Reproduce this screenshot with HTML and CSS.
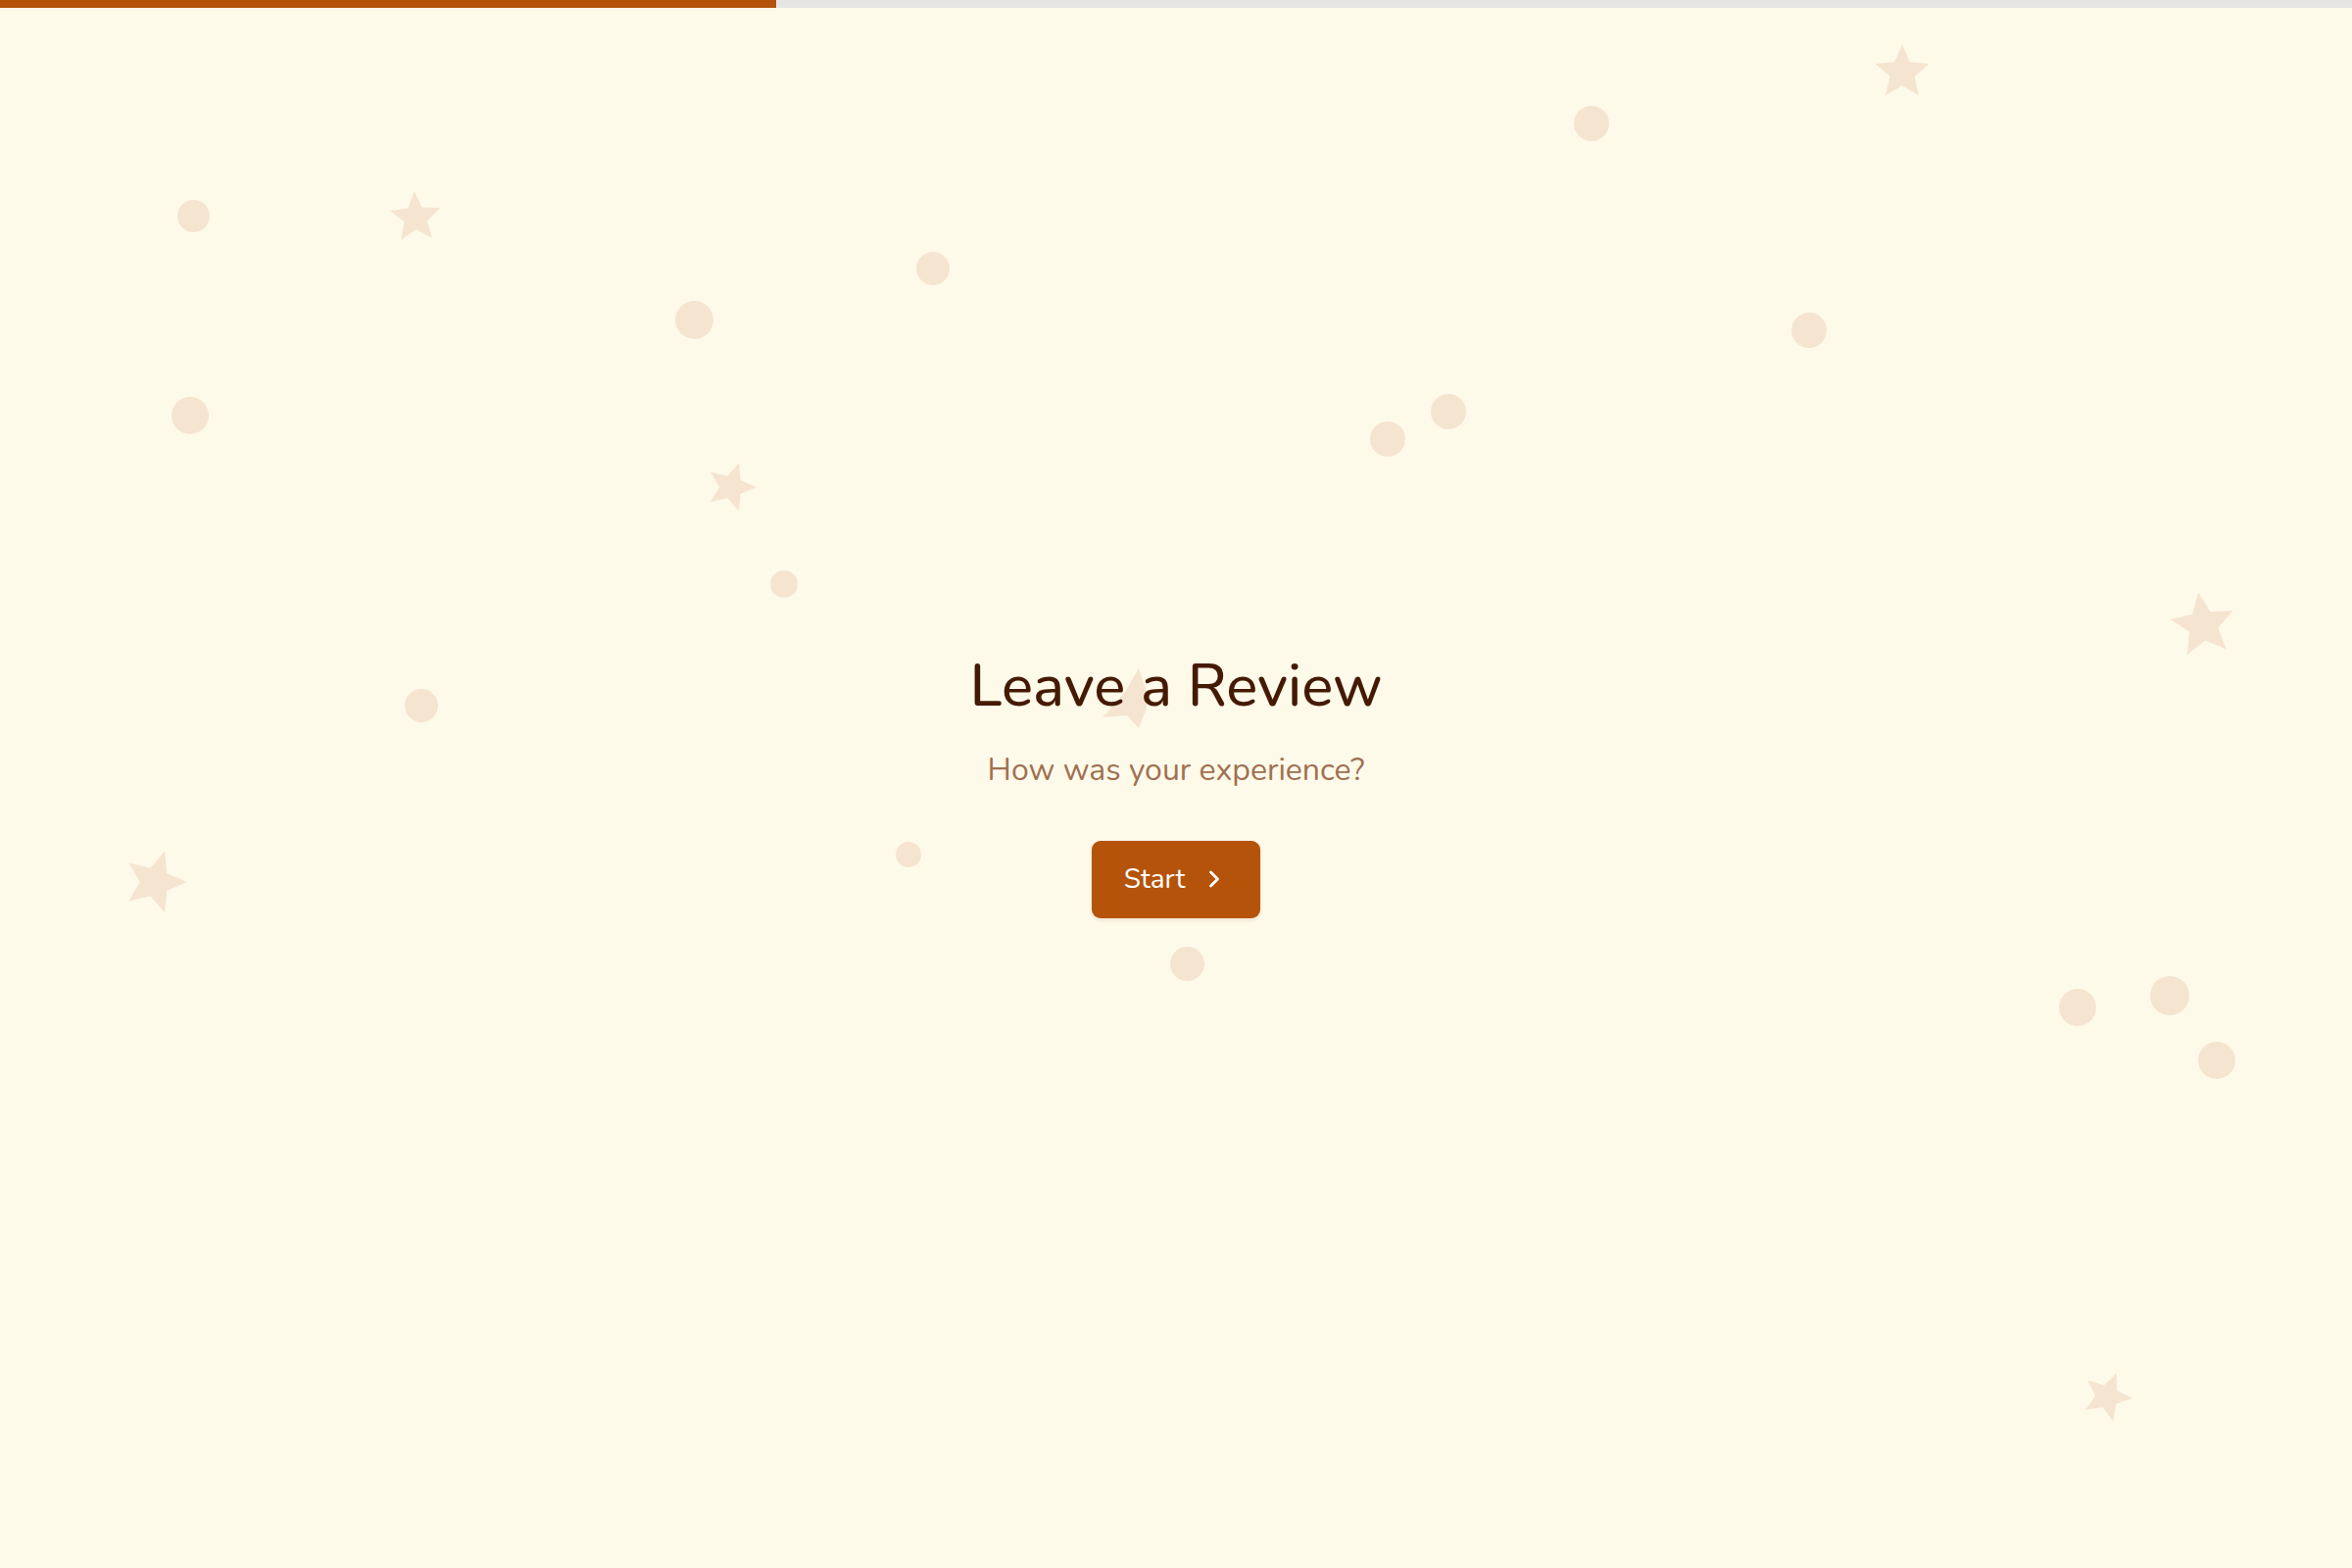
FILE: index.html
```html
<!DOCTYPE html>
<html lang="en">
<head>
<meta charset="utf-8">
<title>Leave a Review</title>
<link rel="stylesheet" href="styles.css">
</head>
<body>
  <div class="progress"><div class="progress-fill" style="width:33%"></div></div>

  <div class="confetti" aria-hidden="true">
    <span class="dot" style="--x:197px;--y:220px;--d:33px"></span>
    <span class="dot" style="--x:194px;--y:424px;--d:38px"></span>
    <span class="dot" style="--x:708px;--y:326px;--d:39px"></span>
    <span class="dot" style="--x:952px;--y:274px;--d:34px"></span>
    <span class="dot" style="--x:800px;--y:596px;--d:28px"></span>
    <span class="dot" style="--x:430px;--y:720px;--d:34px"></span>
    <span class="dot" style="--x:927px;--y:872px;--d:26px"></span>
    <span class="dot" style="--x:1211px;--y:983px;--d:35px"></span>
    <span class="dot" style="--x:1416px;--y:448px;--d:36px"></span>
    <span class="dot" style="--x:1478px;--y:420px;--d:36px"></span>
    <span class="dot" style="--x:1624px;--y:126px;--d:36px"></span>
    <span class="dot" style="--x:1846px;--y:337px;--d:36px"></span>
    <span class="dot" style="--x:2120px;--y:1028px;--d:38px"></span>
    <span class="dot" style="--x:2214px;--y:1016px;--d:40px"></span>
    <span class="dot" style="--x:2262px;--y:1082px;--d:38px"></span>

    <svg class="star" style="--x:424px;--y:222px;--d:54px;--r:-3deg" viewBox="0 0 24 24"><polygon points="12,0 15.23,7.55 23.41,8.29 17.23,13.7 19.05,21.71 12,17.5 4.95,21.71 6.77,13.7 0.59,8.29 8.77,7.55"/></svg>
    <svg class="star" style="--x:746px;--y:497px;--d:52px;--r:18deg" viewBox="0 0 24 24"><polygon points="12,0 15.23,7.55 23.41,8.29 17.23,13.7 19.05,21.71 12,17.5 4.95,21.71 6.77,13.7 0.59,8.29 8.77,7.55"/></svg>
    <svg class="star" style="--x:1941px;--y:74px;--d:58px;--r:0deg" viewBox="0 0 24 24"><polygon points="12,0 15.23,7.55 23.41,8.29 17.23,13.7 19.05,21.71 12,17.5 4.95,21.71 6.77,13.7 0.59,8.29 8.77,7.55"/></svg>
    <svg class="star" style="--x:2248px;--y:638px;--d:68px;--r:-8deg" viewBox="0 0 24 24"><polygon points="12,0 15.23,7.55 23.41,8.29 17.23,13.7 19.05,21.71 12,17.5 4.95,21.71 6.77,13.7 0.59,8.29 8.77,7.55"/></svg>
    <svg class="star" style="--x:158px;--y:900px;--d:66px;--r:18deg" viewBox="0 0 24 24"><polygon points="12,0 15.23,7.55 23.41,8.29 17.23,13.7 19.05,21.71 12,17.5 4.95,21.71 6.77,13.7 0.59,8.29 8.77,7.55"/></svg>
    <svg class="star" style="--x:2150px;--y:1425px;--d:52px;--r:22deg" viewBox="0 0 24 24"><polygon points="12,0 15.23,7.55 23.41,8.29 17.23,13.7 19.05,21.71 12,17.5 4.95,21.71 6.77,13.7 0.59,8.29 8.77,7.55"/></svg>
    <!-- star caught mid-flip, seen nearly edge-on -->
    <svg class="star flip" viewBox="0 0 56 70"><polygon points="42,4 50,28 50,44 42,65 30,52 5,54 18,40 28,28"/></svg>
  </div>

  <main class="intro">
    <h1 class="intro-title">Leave a Review</h1>
    <p class="intro-sub">How was your experience?</p>
    <button class="start-btn" type="button">
      <span>Start</span>
      <svg class="start-icon" viewBox="0 0 24 24" fill="none" stroke="currentColor" stroke-width="2.4" stroke-linecap="round" stroke-linejoin="round"><path d="m9 18 6-6-6-6"/></svg>
    </button>
  </main>
</body>
</html>
```

FILE: styles.css
```css
* { box-sizing: border-box; }

html, body {
  margin: 0;
  height: 100%;
}

body {
  background: #fefaea;
  font-family: "Nunito", "Lato", "Open Sans", sans-serif;
  overflow: hidden;
  position: relative;
}

.progress {
  position: fixed;
  top: 0;
  left: 0;
  right: 0;
  height: 8px;
  background: #e6e5e3;
  z-index: 2;
}

.progress-fill {
  height: 100%;
  background: #b45309;
}

.confetti {
  position: absolute;
  inset: 0;
  pointer-events: none;
  z-index: 0;
}

.dot {
  position: absolute;
  left: calc(var(--x) - var(--d) / 2);
  top: calc(var(--y) - var(--d) / 2);
  width: var(--d);
  height: var(--d);
  border-radius: 50%;
  background: #f5e5d0;
}

.star {
  position: absolute;
  left: calc(var(--x) - var(--d) / 2);
  top: calc(var(--y) - var(--d) / 2);
  width: var(--d);
  height: var(--d);
  transform: rotate(var(--r));
  fill: #f5e5d0;
}

.star.flip {
  left: 1120px;
  top: 678px;
  width: 56px;
  height: 70px;
  transform: none;
}

.intro {
  position: relative;
  z-index: 1;
  min-height: 100vh;
  display: flex;
  flex-direction: column;
  align-items: center;
  justify-content: center;
  text-align: center;
}

.intro-title {
  margin: 0;
  font-size: 60px;
  line-height: 72px;
  font-weight: 500;
  color: #451a03;
}

.intro-sub {
  margin: 28px 0 0;
  font-size: 32px;
  line-height: 44px;
  color: #a07051;
}

.start-btn {
  margin-top: 50px;
  height: 79px;
  padding: 0 33px;
  display: inline-flex;
  align-items: center;
  gap: 16px;
  border: 0;
  border-radius: 9px;
  background: #b45309;
  color: #fff;
  font-family: inherit;
  font-size: 28px;
  box-shadow: 0 2px 4px rgba(120, 53, 15, 0.12);
}

.start-icon {
  width: 28px;
  height: 28px;
}
```
